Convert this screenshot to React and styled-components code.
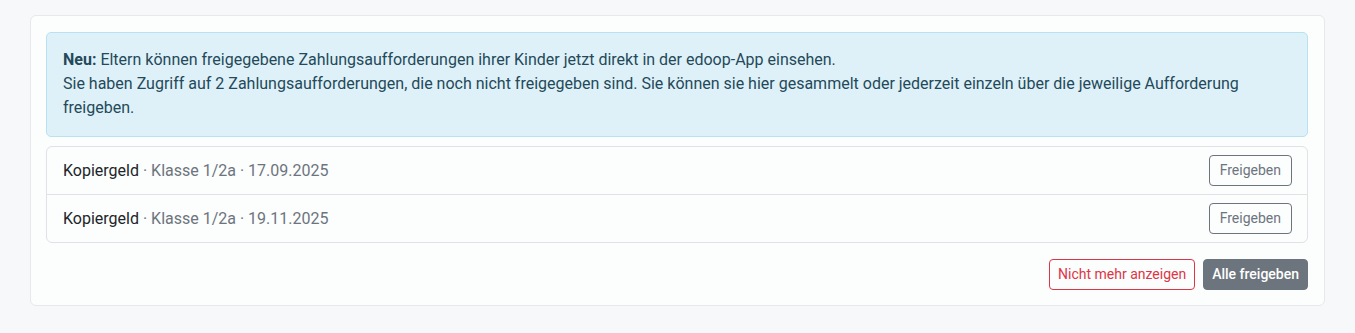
import styled, { createGlobalStyle } from "styled-components"

const GlobalStyle = createGlobalStyle`
  body {
    margin: 0;
    background: #f7f8fa;
    font-family: Roboto, "Liberation Sans", sans-serif;
    -webkit-font-smoothing: antialiased;
  }
`

const Page = styled.div`
  padding: 15px 30px 27px 30px;
`

const Card = styled.div`
  background: #fcfdfd;
  border: 1px solid #e6e8eb;
  border-radius: 6px;
  padding: 16px 16px 15px 15px;
`

const Alert = styled.div`
  background: #dff1f8;
  border: 1px solid #b9e2f1;
  border-radius: 5px;
  padding: 15px 16px 16px 16px;
  color: #23495a;
  font-size: 16px;
  line-height: 24px;

  b {
    font-weight: 700;
  }
`

const List = styled.div`
  margin-top: 9px;
  border: 1px solid #dfe2e6;
  border-radius: 6px;
  background: #fcfdfd;
`

const Row = styled.div`
  display: flex;
  align-items: center;
  justify-content: space-between;
  height: 47px;
  padding: 0 15px 0 16px;

  & + & {
    border-top: 1px solid #dfe2e6;
  }
`

const Title = styled.span`
  font-size: 16px;
  color: #212529;
`

const Meta = styled.span`
  color: #6c757d;
`

const Button = styled.button`
  font-family: inherit;
  font-size: 14px;
  line-height: 21px;
  padding: 4px ${(p) => (p.$wide ? "10px" : "8px")};
  border-radius: 4px;
  cursor: pointer;
  border: 1px solid ${(p) => p.$color};
  background: ${(p) => (p.$solid ? p.$color : "transparent")};
  color: ${(p) => (p.$solid ? "#fff" : p.$color)};
  font-weight: ${(p) => (p.$solid ? 500 : 400)};
`

const Footer = styled.div`
  display: flex;
  justify-content: flex-end;
  gap: 8px;
  margin-top: 16px;
`

const items = [
  { name: "Kopiergeld", klasse: "Klasse 1/2a", date: "17.09.2025" },
  { name: "Kopiergeld", klasse: "Klasse 1/2a", date: "19.11.2025" },
]

const App = () => {
  return (
    <Page>
      <GlobalStyle />
      <Card>
        <Alert>
          <b>Neu:</b> Eltern können freigegebene Zahlungsaufforderungen ihrer Kinder jetzt direkt in der edoop-App einsehen.
          <br />
          Sie haben Zugriff auf 2 Zahlungsaufforderungen, die noch nicht freigegeben sind. Sie können sie hier gesammelt oder jederzeit einzeln über die jeweilige Aufforderung freigeben.
        </Alert>
        <List>
          {items.map((it) => (
            <Row key={it.date}>
              <Title>
                {it.name}
                <Meta> · {it.klasse} · {it.date}</Meta>
              </Title>
              <Button $color="#6c757d" $wide>Freigeben</Button>
            </Row>
          ))}
        </List>
        <Footer>
          <Button $color="#dc3545">Nicht mehr anzeigen</Button>
          <Button $color="#6c757d" $solid>Alle freigeben</Button>
        </Footer>
      </Card>
    </Page>
  )
}

export default App
